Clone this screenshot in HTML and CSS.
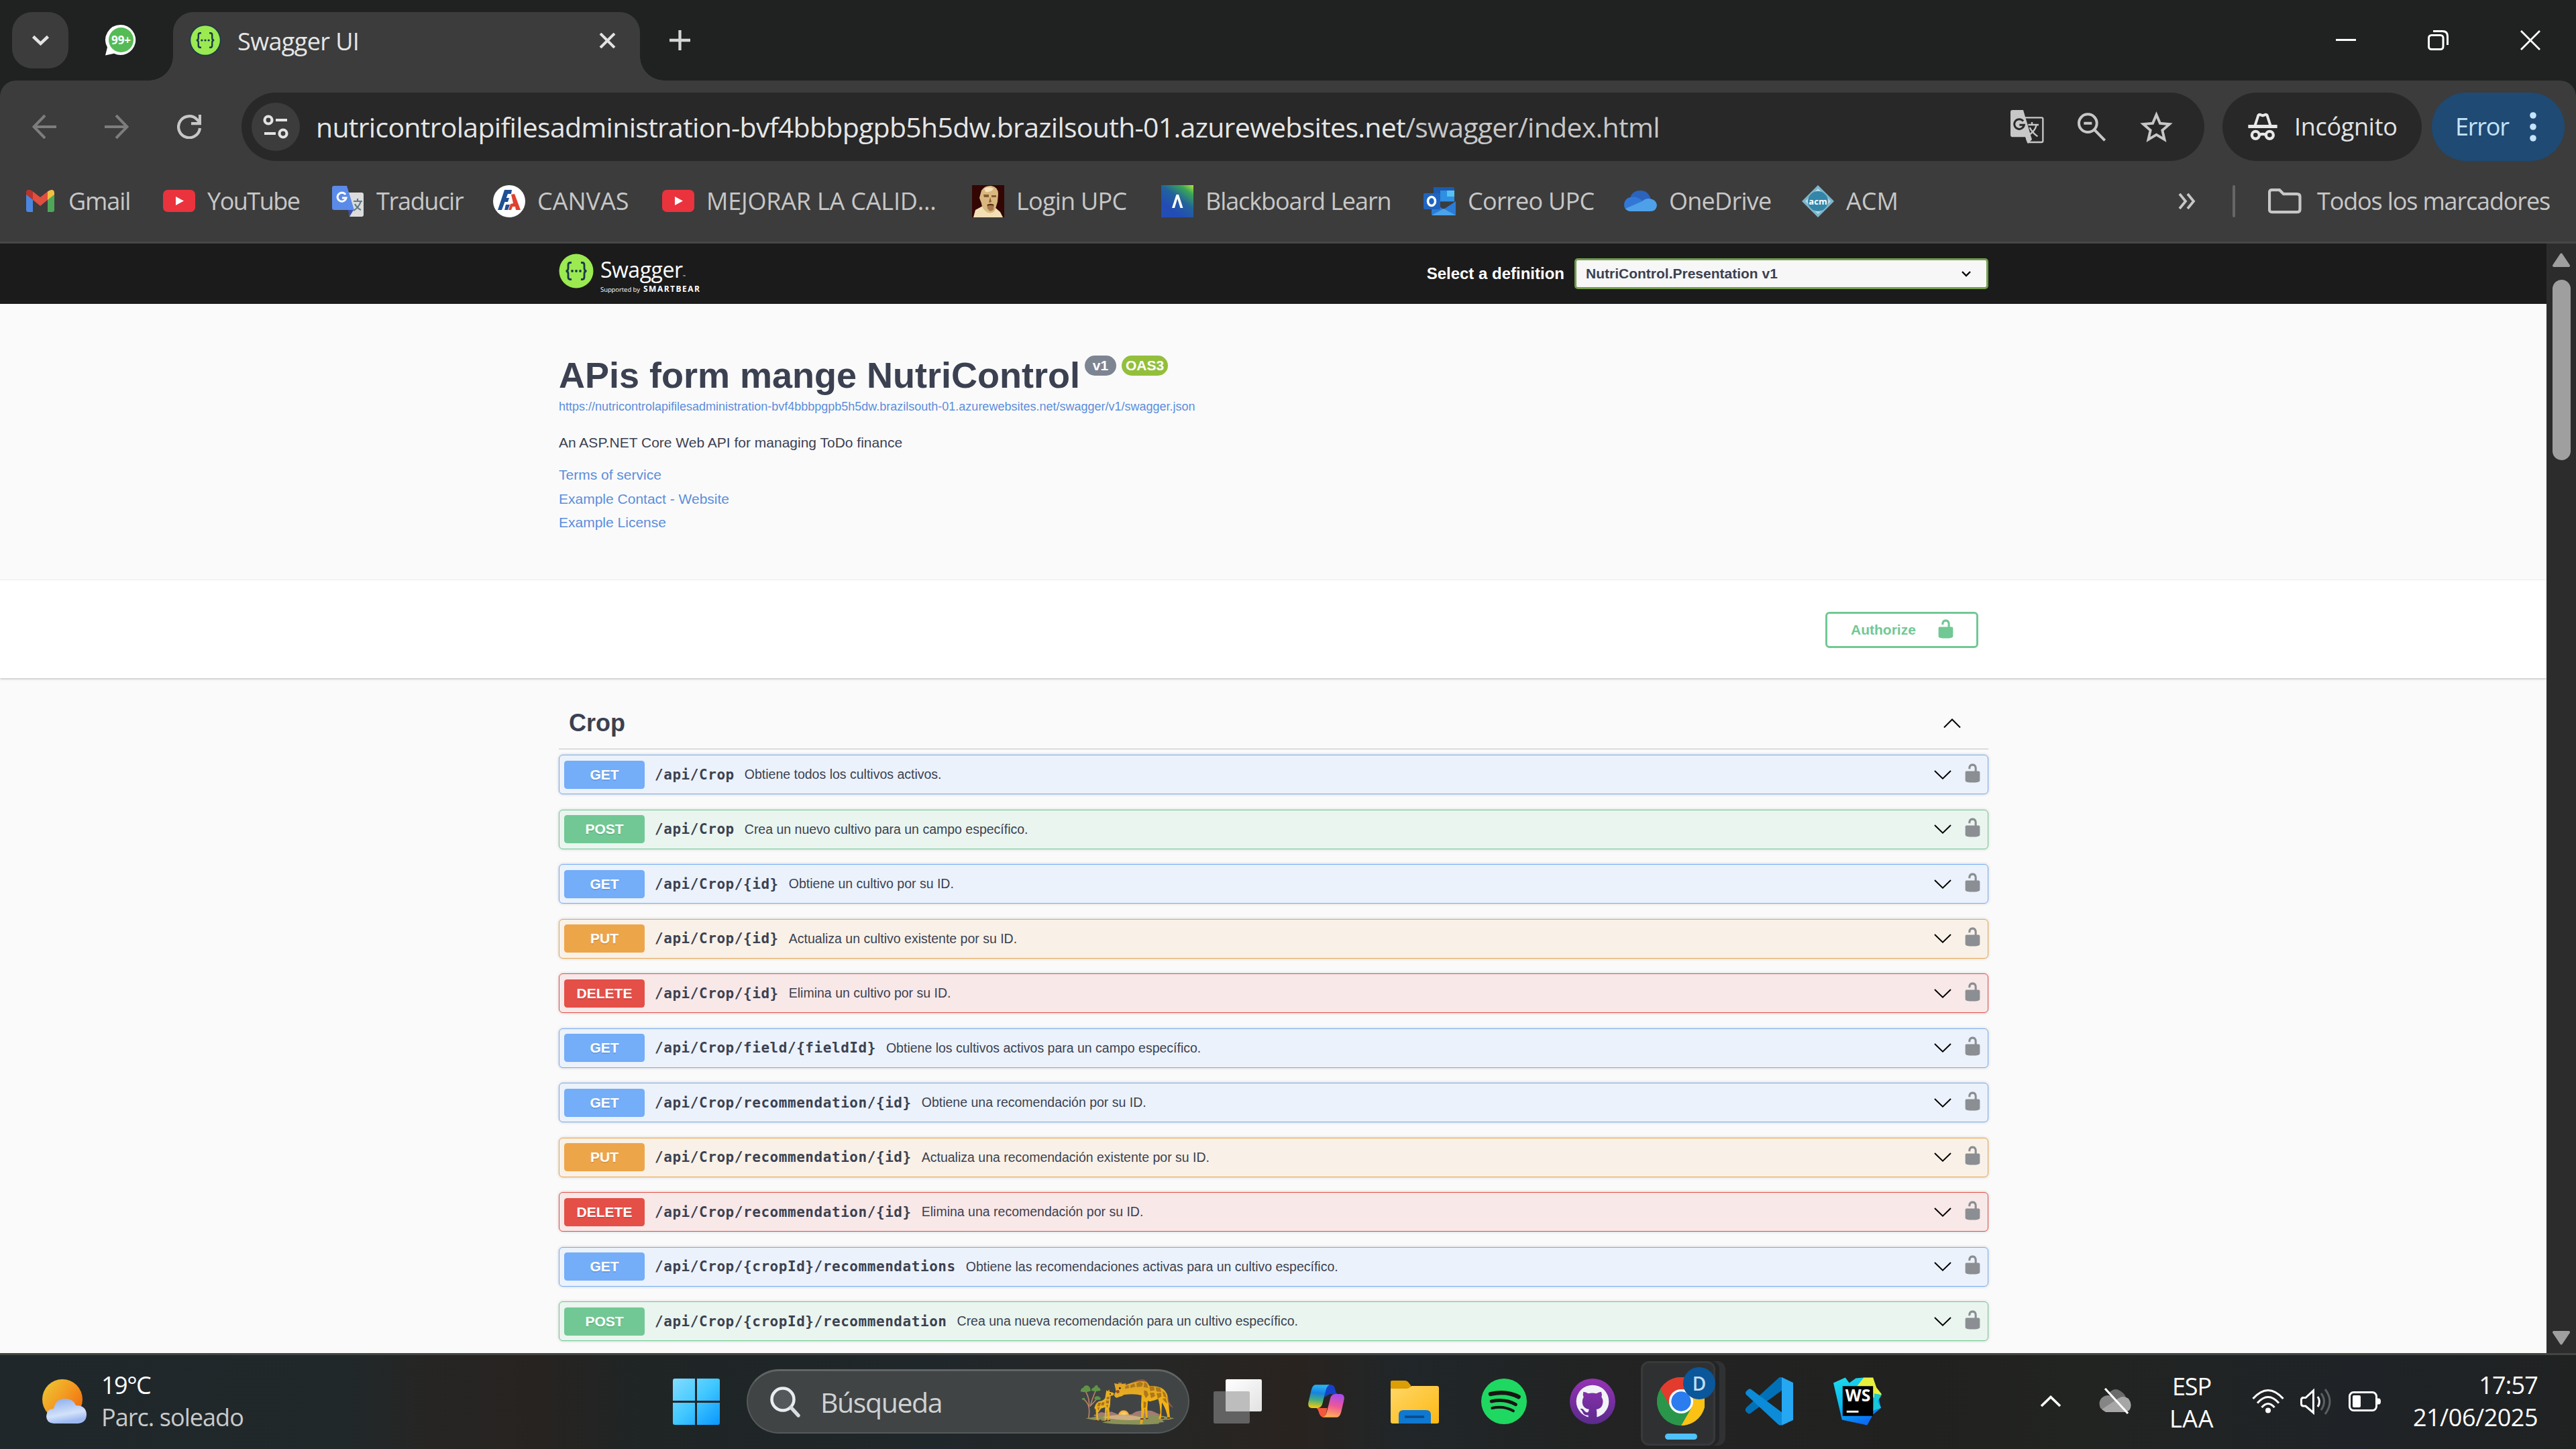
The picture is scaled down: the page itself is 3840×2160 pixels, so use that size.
FILE: index.html
```html
<!DOCTYPE html>
<html lang="es">
<head>
<meta charset="utf-8">
<title>Swagger UI</title>
<link rel="stylesheet" href="styles.css">
</head>
<body>
<svg class="defs" aria-hidden="true">
  <symbol id="unlock" viewBox="0 0 20 20"><path d="M15.8 8H14V5.6C14 2.703 12.665 1 10 1 7.334 1 6 2.703 6 5.6V6h2v-.801C8 3.754 8.797 3 10 3c1.203 0 2 .754 2 2.199V8H4c-.553 0-1 .646-1 1.199V17c0 .549.428 1.139.951 1.307l1.197.387C5.672 18.861 6.55 19 7.1 19h5.8c.549 0 1.428-.139 1.951-.307l1.196-.387c.524-.167.953-.757.953-1.306V9.199C17 8.646 16.352 8 15.8 8z"/></symbol>
  <symbol id="down" viewBox="0 0 26 14"><path d="M1 1l12 11.6L25 1" fill="none" stroke="#000" stroke-width="2"/></symbol>
  <symbol id="youtube" viewBox="0 0 48 48"><rect y="7" width="48" height="33" rx="7" fill="#ea333d"/><path d="M19 17v13l12-6.500z" fill="#fff"/></symbol>
  <symbol id="braces" viewBox="0 0 52 52"><circle cx="26" cy="26" r="25.500" fill="#9bea51"/><path d="M19 13.500h-2q-3 0-3 3.500v5q0 4-3.500 4 3.500 0 3.500 4v5q0 3.500 3 3.500h2M33 13.500h2q3 0 3 3.500v5q0 4 3.500 4-3.500 0-3.500 4v5q0 3.500-3 3.500h-2" fill="none" stroke="#1b3a4b" stroke-width="2.800"/><g fill="#1b3a4b"><circle cx="20" cy="26" r="1.900"/><circle cx="26" cy="26" r="1.900"/><circle cx="32" cy="26" r="1.900"/></g></symbol>
</svg>

<header class="chrome">
  <div class="tabstrip">
    <button class="tab-menu"><svg width="27" height="16" viewBox="0 0 27 16"><path d="M2.500 2.500l11 10.500 11-10.500" fill="none" stroke="#e3e3e3" stroke-width="4.500"/></svg></button>
    <svg class="pinned" width="48" height="48" viewBox="0 0 48 48"><path d="M24 1a22.500 22.500 0 1 1-10 42.800L1 46.500l3-12A22.500 22.500 0 0 1 24 1z" fill="#fff"/><circle cx="24.500" cy="23.500" r="18.500" fill="#55bb55"/><text x="24.500" y="29.500" text-anchor="middle" class="unread">99+</text></svg>
    <div class="tab">
      <svg width="48" height="48" viewBox="-1 -1 54 54"><circle cx="26" cy="26" r="26.500" fill="#1b3a4b"/><use href="#braces" x="1" y="1" width="50" height="50"/></svg>
      <span class="ui tab-title">Swagger UI</span>
      <svg class="tab-close" width="25" height="23" viewBox="0 0 25 23"><path d="M2 1l21 21M23 1L2 22" stroke="#e3e3e3" stroke-width="4"/></svg>
    </div>
    <svg class="new-tab" width="31" height="30" viewBox="0 0 31 30"><path d="M15.500 0v30M0 15h31" stroke="#d5d5d5" stroke-width="4.300"/></svg>
    <div class="window-controls">
      <svg width="30" height="30" viewBox="0 0 30 30"><path d="M0 14.500h30" stroke="#fff" stroke-width="3"/></svg>
      <svg width="31" height="30" viewBox="0 0 31 30"><rect x="1.500" y="7.500" width="21.500" height="21" rx="4" fill="none" stroke="#fff" stroke-width="3"/><path d="M8 1.500h14q7.500 0 7.500 7.500v13" fill="none" stroke="#fff" stroke-width="3"/></svg>
      <svg width="30" height="30" viewBox="0 0 30 30"><path d="M1 1l28 28M29 1L1 29" stroke="#fff" stroke-width="2.800"/></svg>
    </div>
  </div>

  <div class="panel">
    <div class="toolbar">
      <svg class="nav" width="36" height="36" viewBox="0 0 36 36"><path d="M36 18H3M19 1L2.500 18 19 35" fill="none" stroke="#7d7d7d" stroke-width="4"/></svg>
      <svg class="nav" width="36" height="36" viewBox="0 0 36 36"><path d="M0 18h33M17 1l16.500 17L17 35" fill="none" stroke="#7d7d7d" stroke-width="4"/></svg>
      <svg class="nav" width="36" height="36" viewBox="0 0 36 36"><path d="M34 20A16 16 0 1 1 29.500 7L34 11.500" fill="none" stroke="#c7c7c7" stroke-width="4.200"/><path d="M34 0v13.200H21" fill="none" stroke="#c7c7c7" stroke-width="4.200"/></svg>
      <div class="omnibox">
        <span class="site-info"><svg width="38" height="36" viewBox="0 0 38 36"><g fill="none" stroke="#e3e3e3" stroke-width="4.200"><circle cx="8" cy="8" r="5.500"/><path d="M19 8h17M2 28h17"/><circle cx="30" cy="28" r="5.500"/></g></svg></span>
        <span class="ui url"><span class="host">nutricontrolapifilesadministration-bvf4bbbpgpb5h5dw.brazilsouth-01.azurewebsites.net</span><span>/swagger/index.html</span></span>
        <svg class="act" width="50" height="50" viewBox="51 72 150 150"><path d="M116 106h74q6 0 6 6v98q0 6-6 6h-61l-6-16" fill="none" stroke="#c7c7c7" stroke-width="7"/><path d="M60 72h48l39 132-18 18-12-29H60q-9 0-9-9V81q0-9 9-9z" fill="#c7c7c7"/><path d="M108 122a22 22 0 1 0 4 17H91" fill="none" stroke="#282828" stroke-width="9"/><path d="M130 138h47M147 126v12M167 140q-8 30-36 44M137 150q10 22 35 40" fill="none" stroke="#c7c7c7" stroke-width="7"/></svg>
        <svg class="act" width="43" height="43" viewBox="350 82 129 129"><circle cx="396" cy="129" r="40" fill="none" stroke="#c7c7c7" stroke-width="12"/><path d="M378 129h36M424 157l48 49" stroke="#c7c7c7" stroke-width="12"/></svg>
        <svg width="49" height="46" viewBox="2 2 20 19"><path fill="#c7c7c7" d="M22 9.240l-7.190-.62L12 2 9.190 8.630 2 9.240l5.460 4.730L5.820 21 12 17.270 18.180 21l-1.630-7.030L22 9.240zM12 15.400l-3.760 2.270 1-4.280-3.320-2.880 4.380-.38L12 6.100l1.710 4.040 4.380.38-3.320 2.880 1 4.280L12 15.400z"/></svg>
      </div>
      <div class="chip incognito">
        <svg width="44" height="42" viewBox="1113 80 132 122"><path d="M1114 139.500h130" stroke="#e8e8e8" stroke-width="15"/><path d="M1145 134l13-40q2-9 10-7l11 4 11-4q8-2 10 7l13 40" fill="none" stroke="#e8e8e8" stroke-width="12"/><g fill="none" stroke="#e8e8e8" stroke-width="13"><circle cx="1147" cy="178" r="16.500"/><circle cx="1210" cy="178" r="16.500"/><path d="M1163 177q15-7 32 0"/></g></svg>
        <span class="ui">Incógnito</span>
      </div>
      <div class="chip error"><span class="ui">Error</span><svg width="10" height="44" viewBox="0 0 10 44"><g fill="#c5e4fb"><circle cx="5" cy="5" r="4.800"/><circle cx="5" cy="22" r="4.800"/><circle cx="5" cy="39" r="4.800"/></g></svg></div>
    </div>

    <nav class="bookmarks ui">
      <a class="b1"><svg width="48" height="48" viewBox="0 0 48 48"><path d="M3 12v25q0 3 3 3h7V19z" fill="#4a86e0"/><path d="M45 12v25q0 3-3 3h-7V19z" fill="#4fa659"/><path d="M3 12q0-5 4-5 3 0 6 2.500l11 8.500 11-8.500V22l-11 9-11-9v-1L3 13z" fill="#e04f3f"/><path d="M3 12q0-5 4-5 3 0 6 2.500V22L3 14z" fill="#b8342c"/><path d="M45 12q0-5-4-5-3 0-6 2.500V22l10-8z" fill="#f2bf42"/></svg><span>Gmail</span></a>
      <a class="b2"><svg width="48" height="48"><use href="#youtube"/></svg><span>YouTube</span></a>
      <a class="b3"><svg width="48" height="48" viewBox="0 0 48 48"><path d="M22 11h22q3 0 3 3v30q0 3-3 3H26z" fill="#dcdcdc"/><path d="M32 24h13M38 20v4M43 24q-3 9-11 14M34 28q3 6 9 9" stroke="#5f7a80" stroke-width="2.200" fill="none"/><path d="M24 37h8l-6 10z" fill="#3c4fb4"/><path d="M3 1h19l11 36H3q-3 0-3-3V4q0-3 3-3z" fill="#5b8be8"/><path d="M20 14a6.500 6.500 0 1 0 1 5h-6" fill="none" stroke="#fff" stroke-width="3"/></svg><span>Traducir</span></a>
      <a class="b4"><svg width="48" height="48" viewBox="0 0 48 48"><circle cx="24" cy="24" r="24" fill="#fff"/><path d="M17 7h11l-1 6h-5L13 37H7l8-24z" fill="#1f4f94"/><path d="M15 19h9l-2 6h-8zM19 29h6l-3 8h-5z" fill="#1f4f94"/><path d="M27 14l5-1 9 24h-7l-1-5h-4l-2 5h-4l3-9 4-1z" fill="#e0402f"/></svg><span>CANVAS</span></a>
      <a class="b5"><svg width="48" height="48"><use href="#youtube"/></svg><span>MEJORAR LA CALID...</span></a>
      <a class="b6"><svg width="48" height="48" viewBox="0 0 48 48"><path d="M0 0h48v48H0z" fill="#330503"/><path d="M2 48l3-11 11-6 18 2 8 7 4 8z" fill="#f3dfb6"/><path d="M14 8q5-8 15-7 10 2 10 12l-1 12-4 13q-5 6-12 2-7-4-8-13l-3-8z" fill="#d9b87f"/><path d="M17 14h8v4h-7zM29 15h7v3h-7zM27 18l2 7-4 1z" fill="#8a5a33"/><path d="M22 29q6-3 11 0l-1 8-5 2-4-4z" fill="#a8784a"/><path d="M23 30q5-2 9 0" fill="none" stroke="#5a2a15" stroke-width="1.800"/><path d="M18 5q7-4 14 0-3 6-12 5z" fill="#f5e2b8"/></svg><span>Login UPC</span></a>
      <a class="b7"><svg width="48" height="48" viewBox="0 0 48 48"><defs><linearGradient id="bb" x1="1" y1="0" x2=".4" y2=".8"><stop offset="0" stop-color="#b9e63c"/><stop offset=".25" stop-color="#3aa657"/><stop offset=".6" stop-color="#22639c"/><stop offset="1" stop-color="#234db5"/></linearGradient></defs><path d="M0 0h48v48H0z" fill="url(#bb)"/><path d="M16 34l6.500-20h3.500l6.500 20h-4l-4.300-14L20 34z" fill="#fff"/></svg><span>Blackboard Learn</span></a>
      <a class="b8"><svg width="48" height="48" viewBox="0 0 48 48"><path d="M15 3h29q2 0 2 2v20H15z" fill="#1c5bb0"/><path d="M25 8h21v16H25z" fill="#2f8fe0"/><path d="M35 8h11v9H35z" fill="#58c1f4"/><path d="M12 24l18 12 18-12v21H14q-2 0-2-2z" fill="#2c7bd4"/><path d="M12 45l18-10 18 10z" fill="#4ba3ea"/><rect y="12" width="25" height="24" rx="2" fill="#1f65c0"/><ellipse cx="12" cy="24" rx="5.500" ry="6.500" fill="none" stroke="#fff" stroke-width="3.500"/></svg><span>Correo UPC</span></a>
      <a class="b9"><svg width="49" height="48" viewBox="0 0 49 48"><path d="M8 22q3-14 16-14 12 0 16 13L20 34z" fill="#2a64bd"/><path d="M10 18q8-2 14 3l12 8-24 10Q0 39 0 29q1-10 10-11z" fill="#3377d6"/><path d="M27 24q4-4 10-4 11 1 12 10-1 9-10 9H10q-5 0-8-4z" fill="#4ea0e8"/></svg><span>OneDrive</span></a>
      <a class="b10"><svg width="48" height="48" viewBox="0 0 48 48"><path d="M24 0l24 24-24 24L0 24z" fill="#7db6cd"/><path d="M24 5l19 19-19 19L5 24z" fill="#b9d9e6"/><circle cx="24" cy="24" r="15" fill="#3386a8"/><text x="24" y="28.500" text-anchor="middle" class="acm">acm</text></svg><span>ACM</span></a>
      <svg class="more" width="27" height="24" viewBox="0 0 27 24"><path d="M2 1l9 11-9 11M14 1l9 11-9 11" fill="none" stroke="#c7c7c7" stroke-width="3.800"/></svg>
      <i class="divider"></i>
      <svg class="folder" width="50" height="38" viewBox="0 0 50 38"><path d="M5 2.200h12l6 6h20q4.500 0 4.500 4v19q0 4-4.500 4H6.500q-4.500 0-4.500-4v-25q0-4 3-4z" fill="none" stroke="#c7c7c7" stroke-width="4.200"/></svg>
      <span class="all">Todos los marcadores</span>
    </nav>
  </div>
</header>

<div class="viewport">
  <main class="page">
    <div class="topbar"><div class="wrapper">
      <svg class="logo" width="220" height="60" viewBox="0 0 220 60"><use href="#braces" width="52" height="52"/><text x="62" y="36" class="logo-name" textLength="123">Swagger</text><text x="185" y="36" class="logo-tm">™</text><text x="62" y="57" class="logo-by" textLength="59">Supported by</text><text x="126" y="57" class="logo-bear" textLength="84">SMARTBEAR</text></svg>
      <label class="definition"><span>Select a definition</span><span class="select"><span>NutriControl.Presentation v1</span><svg width="14" height="9" viewBox="0 0 14 9"><path d="M1 1l6 6 6-6" fill="none" stroke="#000" stroke-width="2.400"/></svg></span></label>
    </div></div>

    <section class="info"><div class="wrapper">
      <h1><span>APis form mange NutriControl</span><small class="version">v1</small><small class="oas">OAS3</small></h1>
      <a class="spec">https://nutricontrolapifilesadministration-bvf4bbbpgpb5h5dw.brazilsouth-01.azurewebsites.net/swagger/v1/swagger.json</a>
      <p>An ASP.NET Core Web API for managing ToDo finance</p>
      <ul>
        <li>Terms of service</li>
        <li>Example Contact - Website</li>
        <li>Example License</li>
      </ul>
    </div></section>

    <section class="scheme"><div class="wrapper"><button class="authorize"><span>Authorize</span><svg width="31" height="31"><use href="#unlock"/></svg></button></div></section>

    <section class="ops wrapper">
      <h2><span>Crop</span><svg width="26" height="14" viewBox="0 0 26 14"><path d="M1 13.500L13 1.500l12 12" fill="none" stroke="#000" stroke-width="2"/></svg></h2>
      <div class="op get"><b>GET</b><code>/api/Crop</code><span class="sum">Obtiene todos los cultivos activos.</span><svg class="arrow" width="26" height="14"><use href="#down"/></svg><svg class="lock" width="31" height="31"><use href="#unlock"/></svg></div>
      <div class="op post"><b>POST</b><code>/api/Crop</code><span class="sum">Crea un nuevo cultivo para un campo específico.</span><svg class="arrow" width="26" height="14"><use href="#down"/></svg><svg class="lock" width="31" height="31"><use href="#unlock"/></svg></div>
      <div class="op get"><b>GET</b><code>/api/Crop/{id}</code><span class="sum">Obtiene un cultivo por su ID.</span><svg class="arrow" width="26" height="14"><use href="#down"/></svg><svg class="lock" width="31" height="31"><use href="#unlock"/></svg></div>
      <div class="op put"><b>PUT</b><code>/api/Crop/{id}</code><span class="sum">Actualiza un cultivo existente por su ID.</span><svg class="arrow" width="26" height="14"><use href="#down"/></svg><svg class="lock" width="31" height="31"><use href="#unlock"/></svg></div>
      <div class="op delete"><b>DELETE</b><code>/api/Crop/{id}</code><span class="sum">Elimina un cultivo por su ID.</span><svg class="arrow" width="26" height="14"><use href="#down"/></svg><svg class="lock" width="31" height="31"><use href="#unlock"/></svg></div>
      <div class="op get"><b>GET</b><code>/api/Crop/field/{fieldId}</code><span class="sum">Obtiene los cultivos activos para un campo específico.</span><svg class="arrow" width="26" height="14"><use href="#down"/></svg><svg class="lock" width="31" height="31"><use href="#unlock"/></svg></div>
      <div class="op get"><b>GET</b><code>/api/Crop/recommendation/{id}</code><span class="sum">Obtiene una recomendación por su ID.</span><svg class="arrow" width="26" height="14"><use href="#down"/></svg><svg class="lock" width="31" height="31"><use href="#unlock"/></svg></div>
      <div class="op put"><b>PUT</b><code>/api/Crop/recommendation/{id}</code><span class="sum">Actualiza una recomendación existente por su ID.</span><svg class="arrow" width="26" height="14"><use href="#down"/></svg><svg class="lock" width="31" height="31"><use href="#unlock"/></svg></div>
      <div class="op delete"><b>DELETE</b><code>/api/Crop/recommendation/{id}</code><span class="sum">Elimina una recomendación por su ID.</span><svg class="arrow" width="26" height="14"><use href="#down"/></svg><svg class="lock" width="31" height="31"><use href="#unlock"/></svg></div>
      <div class="op get"><b>GET</b><code>/api/Crop/{cropId}/recommendations</code><span class="sum">Obtiene las recomendaciones activas para un cultivo específico.</span><svg class="arrow" width="26" height="14"><use href="#down"/></svg><svg class="lock" width="31" height="31"><use href="#unlock"/></svg></div>
      <div class="op post"><b>POST</b><code>/api/Crop/{cropId}/recommendation</code><span class="sum">Crea una nueva recomendación para un cultivo específico.</span><svg class="arrow" width="26" height="14"><use href="#down"/></svg><svg class="lock" width="31" height="31"><use href="#unlock"/></svg></div>
    </section>
  </main>
  <aside class="scrollbar">
    <svg width="28" height="22" viewBox="0 0 28 22"><path d="M14 2.500L25 19H3z" fill="#9f9f9f" stroke="#9f9f9f" stroke-width="4" stroke-linejoin="round"/></svg>
    <i class="thumb"></i>
    <svg class="end" width="28" height="22" viewBox="0 0 28 22"><path d="M14 19.500L25 3H3z" fill="#9f9f9f" stroke="#9f9f9f" stroke-width="4" stroke-linejoin="round"/></svg>
  </aside>
</div>

<footer class="taskbar ui">
  <svg class="weather" width="66" height="66" viewBox="0 0 66 66"><defs><linearGradient id="sun" x1="0" y1="0" x2="1" y2=".8"><stop offset="0" stop-color="#eccb35"/><stop offset=".5" stop-color="#f39d22"/><stop offset="1" stop-color="#f06a0c"/></linearGradient><linearGradient id="cloud" x1="0" y1="0" x2=".3" y2="1"><stop offset="0" stop-color="#86a9ec"/><stop offset=".7" stop-color="#d3e2fa"/><stop offset="1" stop-color="#9db9f0"/></linearGradient></defs><circle cx="30" cy="30" r="30" fill="url(#sun)"/><path d="M17 66q-11-1-11-11 1-11 11-11 3-15 17-15 12 0 16 10 15 0 16 13 0 13-13 14z" fill="url(#cloud)"/></svg>
  <div class="forecast"><span class="temp">19°C</span><span class="dim">Parc. soleado</span></div>
  <svg class="start" width="72" height="72" viewBox="0 0 72 72"><defs><linearGradient id="win" x1="0" y1="0" x2="1" y2="1"><stop offset="0" stop-color="#83dcff"/><stop offset=".5" stop-color="#41c8ff"/><stop offset="1" stop-color="#0a96ff"/></linearGradient></defs><path d="M4 2h30v33H1V5q0-3 3-3zM37 2h31q3 0 3 3v30H37zM1 38h33v33H4q-3 0-3-3zM37 38h34v30q0 3-3 3H37z" fill="url(#win)"/></svg>
  <div class="search">
    <svg width="45" height="46" viewBox="0 0 45 46"><circle cx="19" cy="19" r="16.500" fill="#55585a" stroke="#e9edf0" stroke-width="4.500"/><path d="M31 31l11 12" stroke="#d9dde0" stroke-width="5.500" stroke-linecap="round"/></svg>
    <span class="query">Búsqueda</span>
    <svg class="giraffes" width="144" height="72" viewBox="60 95 432 216">
      <defs><radialGradient id="glow"><stop offset="0" stop-color="#fff0a0"/><stop offset="1" stop-color="#f7a52b"/></radialGradient><linearGradient id="hide" x1="0" y1="0" x2="0" y2="1"><stop offset="0" stop-color="#d9a12b"/><stop offset=".6" stop-color="#f6b512"/><stop offset="1" stop-color="#e8a616"/></linearGradient></defs>
      <path d="M125 262l35-14 20 4 26-6 30 12 60 0 20-12 30-6 40 2 40 18-40 10H140z" fill="#a37b74"/>
      <circle cx="261" cy="265" r="25" fill="url(#glow)"/>
      <path d="M90 276q60-12 120-14 50-5 100 0 80-4 120 2 30 6 58 12-20 6-55 8l10 8-25 3 2 5q-60 6-140 3-80 0-115-9l25-6q-60-2-100-12z" fill="#8a9158"/>
      <path d="M165 272q40-12 100-12 60 4 95 18-80 14-195-6z" fill="#cfae82"/>
      <path d="M104 275q6-35 0-55-8-20-22-30M106 225q4-35-14-68M112 220q8-30 24-68M110 222q14-14 32-34" fill="none" stroke="#b98366" stroke-width="5"/>
      <path d="M68 156q2-16 14-18 4-12 16-9 14 4 16 24-20 10-46 3zM117 152q0-12 12-14 6-14 14-10 2 10 10 12 8 10 3 12-20 6-39 0zM73 190q4-8 14-5l3 8q-8 4-17-3zM129 188q4-14 16-11 12 2 14 13-16 8-30-2z" fill="#5f9447"/>
      <path d="M264 128q20-8 36-13 30-14 46-13 16 2 26 20-20 14-108 6z" fill="#8f5a3c"/>
      <path d="M219 119l18 4 3-10 5 9 4-9 3 9 20-2-3 8q26-12 60-17 24-4 36 4 6 6 12 16 30-2 52 8 24 12 30 42l4 34q2 36 6 60l-2 6h-9q-4-46-26-76l-2 50-2 24h-11l8-28q-2-40-10-62-14 8-32 10-8 2-14-2l-2 32 1 46-7 6-5-50-8 46-3 24h-12q10-40 6-84l2-44q-30-8-76-3-6 0-10 6-14 4-26 8-10-4-10-10 2-12 8-18z" fill="url(#hide)"/>
      <path d="M268 134l14-8 4 14-18 4zM290 128l18-8 6 14-22 6zM318 118l18-6 12 8-6 14-22 2zM354 114l12 8 4 18-20-4zM376 132l20 2 4 16-20 4zM404 136l20 4 6 18-22-2zM352 150l14 4 6 18-12 14-8-18zM378 162l18-2 6 16-18 10zM408 164l20-2 2 16-16 10zM434 154l12 8 8 22-14-6zM434 188l16-2 6 24-12-10zM350 200l12 4-2 24-10 2z" fill="#ae7718"/>
      <path d="M457 175q6 26 12 34l14 20-12-6q-16-16-14-48z" fill="#8f5a4a"/>
      <path d="M184 150l6 5 6-8 2 10 14 3q8 4 5 10-6 6-14 4l-2 30q0 20-5 28 4 20 0 54h-6l-4-50-4 50h-6l2-60-18 6-14 20 2 34h-8l-4-50-6-6q6-24 20-30 20-2 28-14l4-26z" fill="#e9b01f"/>
      <path d="M186 180l12 0-2 10-12 0zM182 196l14 0-2 14-12-2zM164 204l12 0-4 14-12 0zM148 206l12 0-6 16-12 0zM144 228l10-2-6 16zM182 216l10 0-4 14z" fill="#a87220"/>
      <path d="M336 276h14v5h-14zM360 274h10v5h-10zM428 272h14v5h-14zM456 271h12v6h-12zM136 283h9v5h-9zM180 283h9v5h-9zM192 283h9v5h-9zM152 282h9v5h-9z" fill="#5a2a25"/>
      <path d="M225 157q4-10 14-8l4 10-8 6z" fill="#8f4f2a"/><circle cx="244" cy="141" r="4" fill="#2a1a12"/><circle cx="201" cy="167" r="3" fill="#2a1a12"/>
    </svg>
  </div>
  <div class="apps">
    <svg viewBox="657 87 216 216"><defs><linearGradient id="tv" x1="0" y1="0" x2="1" y2="1"><stop offset="0" stop-color="#fff"/><stop offset="1" stop-color="#e2e2e2"/></linearGradient></defs><rect x="657" y="150" width="162" height="144" rx="7" fill="#626262"/><rect x="711" y="96" width="162" height="144" rx="7" fill="url(#tv)"/><path d="M711 150h101q7 0 7 7v83H718q-7 0-7-7z" fill="#bdbdbd"/></svg>
    <svg viewBox="1056 87 216 216"><defs><linearGradient id="cpa" x1=".4" y1="0" x2=".3" y2="1"><stop offset="0" stop-color="#28b4f5"/><stop offset=".35" stop-color="#1783e0"/><stop offset=".65" stop-color="#48ad7d"/><stop offset="1" stop-color="#fbcb0a"/></linearGradient><linearGradient id="cpb" x1=".6" y1="0" x2=".4" y2="1"><stop offset="0" stop-color="#a64cec"/><stop offset=".5" stop-color="#ee5699"/><stop offset="1" stop-color="#ffb054"/></linearGradient></defs><path d="M1160 121h24q14 0 18 14l6 20q4 7 12 8h-42l-22 14z" fill="#1542c8"/><path d="M1120 225h48l-4 24q-6 18-14 18-14-3-20-26-3-12-10-16z" fill="#f4573c"/><path d="M1115 121h65q-12 4-17 22l-16 62q-5 20-22 20h-26q-19-2-15-24l13-56q6-22 18-24z" fill="url(#cpa)"/><path d="M1213 266h-63q12-4 16-22l16-62q5-20 22-20h24q19 2 16 24l-13 56q-6 22-18 24z" fill="url(#cpb)"/></svg>
    <svg viewBox="0 0 72 72"><defs><linearGradient id="fold" x1="0" y1="0" x2="1" y2="1"><stop offset="0" stop-color="#ffd768"/><stop offset="1" stop-color="#fdb813"/></linearGradient></defs><path d="M2 5h19q3 0 5 2l4 5v9H0V7q0-2 2-2z" fill="#dc9d05"/><path d="M0 17h24q3 0 5-2l2-2h38q3 0 3 3v50q0 3-3 3H3q-3 0-3-3z" fill="url(#fold)"/><path d="M12 69V56q0-7 7-7h34q7 0 7 7v13z" fill="#0f78d0"/><path d="M21 59h29" stroke="#0a4a8c" stroke-width="3.500"/></svg>
    <svg viewBox="45 87 216 216"><circle cx="156" cy="195" r="102" fill="#1fd861"/><g fill="none" stroke="#191414" stroke-linecap="round"><path d="M96 162q72-16 125 13" stroke-width="19"/><path d="M100 195q60-13 108 14" stroke-width="15"/><path d="M103 225q52-11 95 13" stroke-width="12"/></g></svg>
    <svg viewBox="441 87 216 216"><defs><linearGradient id="gh" x1="0" y1="93" x2="0" y2="297" gradientUnits="userSpaceOnUse"><stop offset="0" stop-color="#9433b4"/><stop offset="1" stop-color="#5a2b8c"/></linearGradient></defs><circle cx="552" cy="195" r="102" fill="url(#gh)"/><circle cx="552" cy="195" r="73" fill="#f1f3f6"/><path d="M511 152q10 0 22 8 18-5 36 0 12-8 22-8 5 12 1 24 8 10 6 24-2 26-29 31 2 5 2 14v26q-19 6-38 0v-14q-18 2-24-12-4-10-11-14 0-6 8-3 6 3 10 10 6 9 17 5 1-8 4-12-29-6-31-31-1-14 6-24-5-12-1-24z" fill="url(#gh)"/></svg>
    <span class="active"><svg viewBox="837 87 216 216"><circle cx="948" cy="195" r="108" fill="#2f9e4f"/><path d="M948 195L854 141A108 108 0 0 1 1041.500 141H948z" fill="#e33b2e"/><path d="M948 141h93.500A108 108 0 0 1 948 303l47-81z" fill="#fcc115"/><path d="M855 141l46 81 47-27-40-54z" fill="#e33b2e"/><path d="M855 141l46 81a54 54 0 0 0 94 0l-47 81A108 108 0 0 1 855 141z" fill="#2a964a"/><circle cx="948" cy="195" r="54" fill="#fff"/><circle cx="948" cy="195" r="44" fill="#2b7cee"/></svg><em>D</em></span>
    <svg viewBox="1233 87 216 216"><path d="M1240 222L1382 92q9-9 18-3v56l-144 105q-5 2-9-1l-10-9q-4-10 3-18z" fill="#0071b8"/><path d="M1240 166q-7-8-1-16l11-10q5-3 10 0l138 104v56q-8 5-17-3z" fill="#0b8bd8"/><path d="M1398 87l50 24q4 3 4 8v152q0 5-4 8l-50 23z" fill="#25a7f2"/></svg>
    <svg viewBox="0 0 73 72"><defs><linearGradient id="ws" x1=".1" y1="0" x2=".5" y2="1"><stop offset="0" stop-color="#20d8e8"/><stop offset=".5" stop-color="#08bdf4"/><stop offset="1" stop-color="#0a6cf5"/></linearGradient></defs><path d="M0 8L18 0l6 8 10-7 12-1 20 22 6 24-12 10-9 16-38-8z" fill="url(#ws)"/><path d="M46 0h14l5 15 8 10-8 8-30-19z" fill="#e9f03c"/><path d="M62 24l11 2-6 10 5 10-12 4z" fill="#16c8d8"/><path d="M14 13h46v45H14z" fill="#000"/><text x="18" y="36" class="ws" textLength="38" lengthAdjust="spacingAndGlyphs">WS</text><path d="M20 51.500h18" stroke="#fff" stroke-width="3"/></svg>
  </div>
  <div class="tray">
    <svg class="t1" width="32" height="18" viewBox="0 0 32 18"><path d="M2 16L16 2.500 30 16" fill="none" stroke="#fff" stroke-width="3.600"/></svg>
    <svg class="t2" width="48" height="40" viewBox="0 0 48 40"><path d="M16 6q8-7 15-2 7 4 9 10l-16 6z" fill="#6b6b6b"/><path d="M2 30q-4-10 3-16 6-5 13-2l12 9-6 13H8z" fill="#858585"/><path d="M28 16q8-6 16 0 6 8 2 16-3 4-8 4H10l-6-4z" fill="#a6a6a6"/><path d="M9 1l34 37" stroke="#fff" stroke-width="3.200"/></svg>
    <div class="lang"><span class="esp">ESP</span><span class="laa">LAA</span></div>
    <svg class="t3" width="48" height="38" viewBox="0 0 48 38"><g fill="none" stroke="#fff" stroke-width="3.200"><path d="M1.500 15q22.500-25 45 0M8 21.500q16-18 32 0M14.500 28q9.500-11 19 0"/></g><circle cx="24" cy="32.500" r="4" fill="#fff"/></svg>
    <svg class="t4" width="48" height="40" viewBox="0 0 48 40"><g fill="none" stroke-width="3"><path d="M2 14.500h6L19.500 4v33L8 27H5q-3.500 0-3.500-3.500v-6q0-3 3.500-3z" stroke="#fff"/><path d="M26 13q5 7 0 15" stroke="#fff"/><path d="M31 8q9 12 0 25M37 2q14 18 0 37" stroke="#5c5e60"/></g></svg>
    <svg class="t5" width="48" height="30" viewBox="0 0 48 30"><rect x="1.500" y="1.500" width="40" height="27" rx="6" fill="none" stroke="#fff" stroke-width="3"/><rect x="6" y="6" width="12" height="18" rx="2" fill="#fff"/><path d="M43 10.500h2q3 0 3 4.500t-3 4.500h-2z" fill="#fff"/></svg>
    <div class="clock"><span class="time">17:57</span><span class="date">21/06/2025</span></div>
  </div>
</footer>
</body>
</html>
```
FILE: styles.css
```css
* { box-sizing: border-box; margin: 0; padding: 0; }
body { width: 3840px; height: 2160px; overflow: hidden; display: flex; flex-direction: column; background: #fafafa; font-family: "Liberation Sans", Arial, sans-serif; color: #3b4151; white-space: nowrap; }
svg { display: block; flex: none; }
.defs { position: absolute; width: 0; height: 0; }
button { border: 0; font: inherit; }
.ui { font-family: "Open Sans", "Noto Sans", sans-serif; font-size: 36px; }

/* Browser frame */
.chrome { background: #1f2221; height: 363px; flex: none; border-bottom: 3px solid #474747; }
.tabstrip { height: 120px; display: flex; align-items: center; }
.tab-menu { width: 84px; height: 84px; margin-left: 18px; border-radius: 30px; background: #3c3c3c; display: flex; align-items: center; justify-content: center; }
.pinned { margin-left: 54px; }
.unread { font: bold 17px "Open Sans", sans-serif; fill: #fff; }
.tab { position: relative; align-self: flex-end; width: 696px; height: 102px; margin-left: 54px; padding: 0 36px 18px 24px; border-radius: 30px 30px 0 0; background: #3c3c3c; display: flex; align-items: center; color: #e6e6e6; }
.tab::before, .tab::after { content: ""; position: absolute; bottom: 0; width: 36px; height: 36px; }
.tab::before { left: -36px; background: radial-gradient(circle at 0 0, transparent 35.500px, #3c3c3c 36px); }
.tab::after { right: -36px; background: radial-gradient(circle at 100% 0, transparent 35.500px, #3c3c3c 36px); }
.tab-title { margin-left: 24px; padding-top: 2px; letter-spacing: -.6px; }
.tab-close { margin-left: auto; }
.new-tab { margin-left: 44px; }
.window-controls { margin-left: auto; margin-right: 53px; display: flex; gap: 107px; }
.panel { height: 240px; background: #3c3c3c; border-radius: 24px 24px 0 0; padding-top: 18px; }
.toolbar { height: 102px; padding-left: 48px; display: flex; align-items: center; }
.nav { margin-right: 72px; }
.omnibox { width: 2926px; height: 102px; margin-left: -12px; border-radius: 51px; background: #282828; padding: 0 47px 0 15px; display: flex; align-items: center; }
.site-info { width: 72px; height: 72px; border-radius: 50%; background: #3c3c3c; display: flex; align-items: center; justify-content: center; }
.url { font-size: 41px; letter-spacing: -.71px; margin: 0 auto 0 24px; padding-bottom: 1px; color: #c7c7c7; }
.host { color: #e6e6e6; }
.act { margin-right: 50px; }
.chip { height: 102px; border-radius: 51px; display: flex; align-items: center; }
.incognito { width: 297px; margin-left: 27px; padding-left: 38px; gap: 25px; letter-spacing: -.3px; background: #282828; color: #e3e3e3; }
.error { width: 198px; margin-left: 15px; padding: 0 42px 0 35px; justify-content: space-between; letter-spacing: -1.2px; background: #1f4a74; color: #c5e4fb; }
.chip .ui { padding-bottom: 1px; }
.bookmarks { height: 120px; padding: 0 0 0 36px; display: flex; align-items: center; color: #c7c7c7; }
.bookmarks a { display: flex; align-items: center; gap: 18px; }
.bookmarks span { padding-bottom: 2px; }
.b1 { width: 207px; letter-spacing: -1.1px; }
.b2 { width: 252px; letter-spacing: -1.5px; }
.b3 { width: 240px; letter-spacing: -1.3px; }
.b4 { width: 252px; }
.b5 { width: 462px; letter-spacing: -.2px; }
.b6 { width: 282px; letter-spacing: -.75px; }
.b7 { width: 391px; letter-spacing: -1.1px; }
.b8 { width: 299px; letter-spacing: -.7px; }
.b9 { width: 265px; letter-spacing: -.75px; }
.acm { font: bold 13px "Open Sans", sans-serif; letter-spacing: 0; fill: #fff; }
.more { margin-left: auto; }
.divider { width: 4px; height: 48px; border-radius: 2px; background: #666; margin: 0 49px 0 54px; }
.folder { margin-right: 23px; }
.all { width: 386px; letter-spacing: -1.15px; }

/* Swagger page */
.viewport { height: 1654px; flex: none; display: flex; }
.page { width: 3796px; overflow: hidden; }
.wrapper { width: 2132px; margin: 0 auto; }
.topbar { height: 90px; background: #1b1b1b; }
.topbar .wrapper { display: flex; justify-content: space-between; align-items: center; height: 90px; }
.logo { margin-left: 1px; }
.logo-name { font: 32px "Open Sans", sans-serif; fill: #fff; }
.logo-tm { font: 5px "Open Sans", sans-serif; fill: #fff; }
.logo-by { font: 9.500px "Open Sans", sans-serif; fill: #fff; }
.logo-bear { font: bold 12px "Open Sans", sans-serif; fill: #fff; }
.definition { display: flex; align-items: center; color: #fff; font-weight: bold; font-size: 24px; }
.select { width: 617px; height: 46px; margin-left: 15px; padding: 0 23px 0 14px; border: 3px solid #729f4d; border-radius: 5px; background: #f7f7f7; color: #3b4151; font-size: 21px; display: flex; align-items: center; justify-content: space-between; }
.info { height: 412px; padding-top: 75px; }
.info .wrapper { padding-left: 1px; }
h1 { display: flex; align-items: flex-start; font-size: 54px; line-height: 62px; }
h1 small { height: 30px; margin-top: 2px; border-radius: 15px; color: #fff; font-size: 21px; line-height: 30px; text-align: center; }
.version { width: 47px; margin-left: 7px; background: #7d8492; }
.oas { width: 69px; margin-left: 8px; background: #93bf3b; }
.spec { display: block; margin-top: 5px; font-size: 18px; line-height: 22px; color: #5a8edd; }
.info p { margin-top: 28px; font-size: 21px; line-height: 30px; }
.info ul { margin-top: 15px; list-style: none; font-size: 21px; line-height: 35.500px; color: #5a8edd; }
.scheme { height: 146px; background: #fff; padding-top: 47px; box-shadow: 0 1px 3px rgba(0,0,0,.28); }
.scheme .wrapper { display: flex; justify-content: flex-end; padding-right: 15px; }
.authorize { width: 228px; height: 54px; border: 3px solid #71c894; border-radius: 6px; background: #fff; color: #71c894; font-weight: bold; font-size: 21px; display: flex; align-items: center; justify-content: space-between; padding: 0 30px 0 35px; }
.authorize svg { fill: #71c894; margin-bottom: 3px; }
h2 { height: 106px; padding: 29px 41px 0 15px; margin-bottom: 8px; border-bottom: 1px solid #c0c1c6; font-size: 36px; display: flex; align-items: center; justify-content: space-between; }
.ops { padding-left: 1px; }
.op { height: 59px; margin-bottom: 22.500px; border: 1px solid; border-radius: 6px; box-shadow: 0 0 4.500px rgba(0,0,0,.19); padding: 0 7px; display: flex; align-items: center; }
.op b { width: 120px; height: 42px; border-radius: 4.500px; color: #fff; font-size: 21px; line-height: 42px; text-align: center; text-shadow: 0 1.500px 0 rgba(0,0,0,.1); }
.op code { margin-left: 15px; font: bold 21px "DejaVu Sans Mono", monospace; letter-spacing: .555px; }
.sum { margin-left: 15px; font-size: 19.500px; }
.arrow { margin-left: auto; }
.lock { margin: 0 0 5px 16px; fill: #8b8e92; }
.get { background: #ebf2fb; border-color: #74adf8; } .get b { background: #74adf8; }
.post { background: #eaf5ef; border-color: #71c894; } .post b { background: #71c894; }
.put { background: #f9f1e7; border-color: #eda54a; } .put b { background: #eda54a; }
.delete { background: #f8e8e8; border-color: #e44f48; } .delete b { background: #e44f48; }
.scrollbar { width: 44px; background: #2c2c2c; display: flex; flex-direction: column; align-items: center; padding: 14px 0 12px; }
.thumb { width: 27px; height: 269px; margin-top: 18px; border-radius: 14px; background: #9f9f9f; }
.scrollbar .end { margin-top: auto; }

/* Windows taskbar */
.taskbar { height: 143px; flex: none; border-top: 3px solid #434543; padding: 0 57px 2px 63px; display: flex; align-items: center; color: #fff; background: linear-gradient(90deg, #20272a 0, #21282a 520px, #262523 640px, #272321 800px, #1f2525 960px, #20272a 1400px, #262625 1750px, #29231f 1930px, #202629 2100px, #222322 2400px, #212120 2850px, #222421 3080px, #1f2327 3500px, #202222 3840px); }
.forecast { width: 851px; margin-left: 22px; display: flex; flex-direction: column; line-height: 48px; }
.temp { letter-spacing: -1.5px; }
.dim { color: #c9caca; letter-spacing: -.95px; }
.search { width: 660px; height: 96px; margin: 0 36px 0 39px; padding: 0 19px 0 33px; border: 2px solid #55595a; border-top: 3px solid #626566; border-radius: 48px; background: #404445; display: flex; align-items: center; }
.query { margin-left: 30px; font-size: 41px; letter-spacing: -1.4px; color: #d0d1d1; }
.giraffes { margin-left: auto; }
.apps { display: flex; gap: 60px; }
.apps svg { width: 72px; height: 72px; }
.ws { font: bold 26px "Open Sans", sans-serif; fill: #fff; }
.active { position: relative; }
.active svg { position: relative; }
.active::before { content: ""; position: absolute; left: -23px; top: -24px; width: 105px; height: 120px; border: 3px solid #38393b; border-radius: 12px; background: #2f3032; box-shadow: 6px 0 0 0 #232425, 15px 0 0 0 #303133; }
.active::after { content: ""; position: absolute; left: 13px; top: 84px; width: 48px; height: 9px; border-radius: 5px; background: #4fc1fc; }
.active em { position: absolute; left: 40px; top: -15px; width: 48px; height: 48px; border-radius: 50%; background: #0a579b; color: #c4dcf0; font: normal 600 28px/48px "Open Sans", sans-serif; text-align: center; }
.tray { margin-left: auto; display: flex; align-items: center; line-height: 48px; }
.t2 { margin-left: 56px; }
.lang { width: 68px; margin-left: 56px; display: flex; flex-direction: column; align-items: center; padding-top: 4px; }
.esp { letter-spacing: -1.1px; }
.laa { letter-spacing: .6px; }
.t3 { margin-left: 56px; }
.t4, .t5 { margin-left: 24px; }
.clock { width: 234px; display: flex; flex-direction: column; align-items: flex-end; }
.time { letter-spacing: -.8px; }
.date { letter-spacing: -.5px; }
```
